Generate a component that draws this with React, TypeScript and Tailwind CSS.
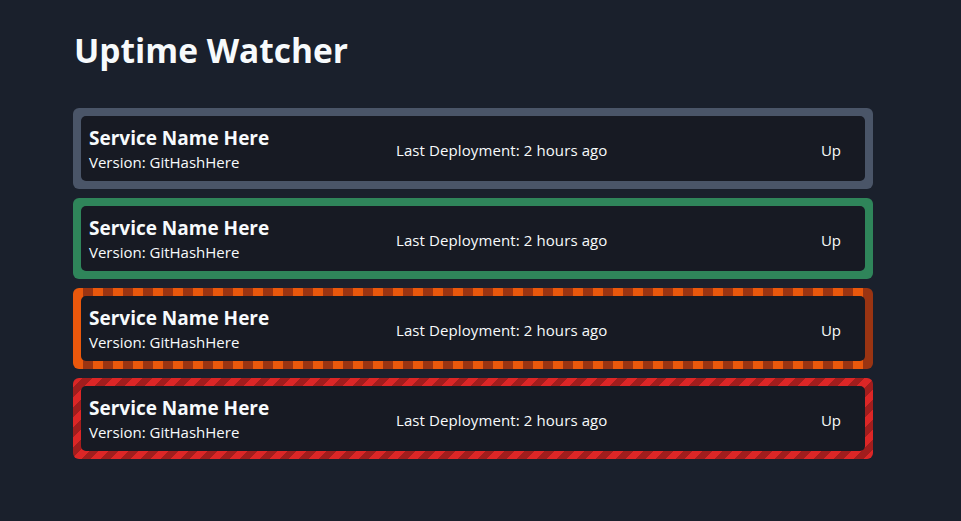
import React from 'react';

type Status = 'unknown' | 'up' | 'degraded' | 'down';

interface Service {
  name: string;
  version: string;
  lastDeploy: string;
  state: string;
  status: Status;
}

const services: Service[] = [
  { name: 'Service Name Here', version: 'GitHashHere', lastDeploy: '2 hours ago', state: 'Up', status: 'unknown' },
  { name: 'Service Name Here', version: 'GitHashHere', lastDeploy: '2 hours ago', state: 'Up', status: 'up' },
  { name: 'Service Name Here', version: 'GitHashHere', lastDeploy: '2 hours ago', state: 'Up', status: 'degraded' },
  { name: 'Service Name Here', version: 'GitHashHere', lastDeploy: '2 hours ago', state: 'Up', status: 'down' },
];

// border look per status
const frame: Record<Status, string> = {
  unknown: 'bg-[#4a5568]',
  up: 'bg-[#2f855a]',
  degraded: 'bg-[repeating-linear-gradient(90deg,#ea580c_0px,#ea580c_10px,#9a3412_10px,#9a3412_20px)]',
  down: 'bg-[repeating-linear-gradient(-45deg,#dc2626_0px,#dc2626_7px,#a11d1d_7px,#a11d1d_14px)]',
};

const ServiceCard: React.FC<{ service: Service }> = ({ service }) => (
  <div className={`rounded-md p-2 h-[81px] ${frame[service.status]}`}>
    <div className="h-full rounded-[5px] bg-[#171a23] pl-2 pr-6 pt-[3px] flex items-center text-[#f7fafc]">
      <div className="w-[307px] flex flex-col">
        <span className="text-[19px] leading-[24px] font-bold">{service.name}</span>
        <span className="text-[15px] leading-[24px]">Version: {service.version}</span>
      </div>
      <div className="flex-1 text-[15px] tracking-[0.1px]">Last Deployment: {service.lastDeploy}</div>
      <div className="text-[15px]">{service.state}</div>
    </div>
  </div>
);

export default function App() {
  return (
    <div className="min-h-[521px] bg-[#1a202c] pl-[73px] pt-[26px] font-['Open_Sans',sans-serif]">
      <div className="w-[800px]">
        <h1 className="text-[33.5px] leading-[48px] font-bold text-[#f7fafc] pl-px">Uptime Watcher</h1>
        <div className="mt-[34px] flex flex-col gap-[9px]">
          {services.map((s, i) => (
            <ServiceCard key={i} service={s} />
          ))}
        </div>
      </div>
    </div>
  );
}
